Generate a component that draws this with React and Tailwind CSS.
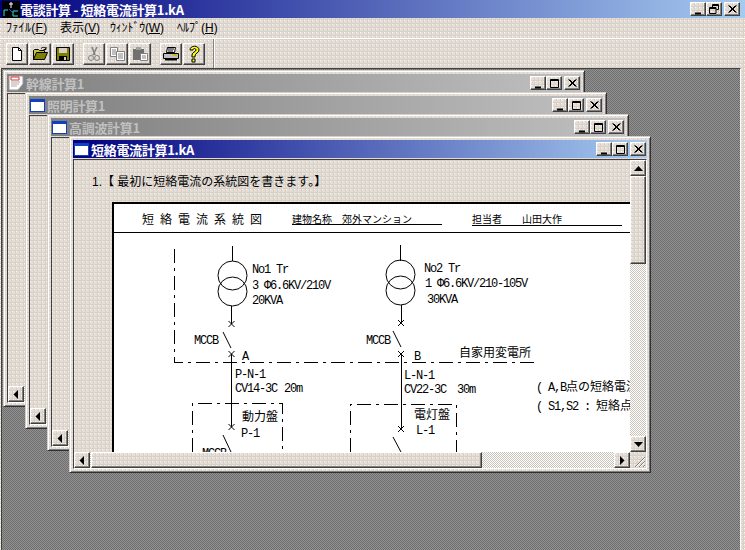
const FACE = "bg-[#d6d2ca] bg-[conic-gradient(from_270deg_at_1px_1px,#fbfae0_25%,transparent_0),conic-gradient(from_270deg_at_3px_3px,#e6dcd8_25%,transparent_0)] bg-[length:4px_4px]";
const DESK = "bg-[#808080] bg-[conic-gradient(#6e6e6e_25%,#929292_0_50%,#6e6e6e_0_75%,#929292_0)] bg-[length:2px_2px]";
const CHECK = "bg-[conic-gradient(#fff_25%,#c8c4bc_0_50%,#fff_0_75%,#c8c4bc_0)] bg-[length:2px_2px]";
const RAISED = "border border-t-white border-l-white border-r-[#404040] border-b-[#404040] shadow-[inset_-1px_-1px_0_#808080]";
const FONT = "font-['Liberation_Sans','Noto_Sans_CJK_JP',sans-serif]";
const TITLE_FONT = "font-['Noto_Sans_CJK_JP','Liberation_Sans',sans-serif]";

function Btn({ className, children }) {
  return <div className={`flex items-center justify-center ${FACE} ${RAISED} ${className}`}>{children}</div>;
}

function CtlIcon({ type }) {
  const paths = {
    min: <path d="M2 9.5h6" strokeWidth="2" />,
    max: <path d="M1.5 1.5h8v8h-8zM1.5 2.5h8" />,
    restore: <path d="M3.5 3V.5h6v5H7.5M3.5 1.5h6M.5 3.5h6.5v6H.5zM.5 4.5h6.5" />,
    close: <path d="M1.5 1.5l7 7M2.5 1.5l7 7M8.5 1.5l-7 7M9.5 1.5l-7 7" />,
  };
  return (
    <svg width="11" height="11" viewBox="0 0 11 11" fill="none" stroke="#000">
      {paths[type]}
    </svg>
  );
}

function Controls({ restore }) {
  return (
    <div className="flex shrink-0">
      <Btn className="w-4 h-3.5"><CtlIcon type="min" /></Btn>
      <Btn className="w-4 h-3.5"><CtlIcon type={restore ? "restore" : "max"} /></Btn>
      <Btn className="w-4 h-3.5 ml-0.5"><CtlIcon type="close" /></Btn>
    </div>
  );
}

function Arrow({ dir }) {
  const d = { left: "M6 0v9L1.5 4.5z", right: "M2 0v9l4.5-4.5z", up: "M4.5 2L9 7H0z", down: "M0 2h9L4.5 7z" };
  return (
    <svg width="9" height="9" viewBox="0 0 9 9">
      <path d={d[dir]} fill="#000" />
    </svg>
  );
}

function WinIcon({ doc }) {
  if (doc)
    return (
      <svg width="16" height="16" viewBox="0 0 16 16" className="shrink-0">
        <path d="M1 1h14v8l-5 6H1z" fill="#fff" stroke="#999" />
        <path d="M3 2h8v3H3z" fill="#fff" stroke="#e03030" />
        <path d="M3 7h9M3 9h8M3 11h6" stroke="#aaa" />
      </svg>
    );
  return (
    <svg width="15" height="13" viewBox="0 0 15 13" className="shrink-0">
      <path d="M0 0h15v13H0z" fill="#1040c0" />
      <path d="M1 3h13v9H1z" fill="#fff" />
    </svg>
  );
}

function ChildWindow({ title, active, doc, className, children }) {
  return (
    <div className={`absolute w-[582px] h-[337px] flex flex-col p-[3px] ${FACE} border border-t-[#d4d0c8] border-l-[#d4d0c8] border-r-[#303030] border-b-[#303030] shadow-[inset_1px_1px_0_#fff,inset_-1px_-1px_0_#808080] ${className}`}>
      <div
        className={`h-[18px] shrink-0 flex items-center pr-px pl-px ${
          active ? "bg-[linear-gradient(to_right,#000080,#a6caf0)]" : "bg-[linear-gradient(to_right,#808080,#c0c0c0)]"
        }`}
      >
        <WinIcon doc={doc} />
        <span className={`ml-0.5 text-[13px] font-bold leading-none flex-1 tracking-[-0.3px] ${TITLE_FONT} ${active ? "text-white" : "text-[#c0c0c0]"}`}>{title}</span>
        <Controls />
      </div>
      <div className="mt-px flex-1 min-h-0 border border-t-[#404040] border-l-[#404040] border-r-white border-b-white grid grid-cols-[1fr_16px] grid-rows-[1fr_16px]">
        <div className="overflow-hidden min-w-0 min-h-0">{children}</div>
        <div className={`flex flex-col ${CHECK}`}>
          <Btn className="w-4 h-4 shrink-0"><Arrow dir="up" /></Btn>
          <Btn className="w-4 h-[88px] shrink-0" />
          <div className="flex-1" />
          <Btn className="w-4 h-4 shrink-0"><Arrow dir="down" /></Btn>
        </div>
        <div className={`flex ${CHECK}`}>
          <Btn className="w-4 h-4 shrink-0"><Arrow dir="left" /></Btn>
          <Btn className="w-[391px] h-4 shrink-0 ml-px" />
          <div className="flex-1" />
          <Btn className="w-4 h-4 shrink-0"><Arrow dir="right" /></Btn>
        </div>
        <div className={`${FACE} flex items-end justify-end overflow-hidden`}>
          <svg width="13" height="13" viewBox="0 0 13 13" fill="none">
            <path d="M12 2L2 12M12 6l-6 6M12 10l-2 2" stroke="#808080" />
            <path d="M12 3L3 12M12 7l-5 5M12 11l-1 1" stroke="#fff" />
          </svg>
        </div>
      </div>
    </div>
  );
}

const ToolIcons = {
  new: (
    <svg width="16" height="16" viewBox="0 0 16 16">
      <path d="M3.5 1.5h6l3 3v10h-9z" fill="#fff" stroke="#000" />
      <path d="M9.5 1.5v3h3" fill="none" stroke="#000" />
    </svg>
  ),
  open: (
    <svg width="17" height="16" viewBox="0 0 17 16">
      <path d="M1.5 13.5v-9l1-1h4l1 1h5v2" fill="#c8c040" stroke="#000" />
      <path d="M1.5 13.5l3-7h11l-3 7z" fill="#808000" stroke="#000" />
      <path d="M9 2.5c1.5-1.5 3.5-1.5 5 0M14 1v2.5h-2.5" fill="none" stroke="#000" />
    </svg>
  ),
  save: (
    <svg width="16" height="16" viewBox="0 0 16 16">
      <path d="M1.5 1.5h13v13h-13z" fill="#808000" stroke="#000" />
      <path d="M4 2h8v5H4z" fill="#d4d0c8" />
      <path d="M4 10h8v4.5H4z" fill="#000" />
      <path d="M9 11h2v3H9z" fill="#d4d0c8" />
    </svg>
  ),
  cut: (
    <svg width="16" height="16" viewBox="0 0 16 16" fill="none" stroke="#808080">
      <path d="M6 1l3 8M11 1L7 9" strokeWidth="1.5" />
      <circle cx="5" cy="12" r="2.5" />
      <circle cx="11" cy="12" r="2.5" />
    </svg>
  ),
  copy: (
    <svg width="17" height="16" viewBox="0 0 17 16" fill="#fff" stroke="#808080">
      <path d="M1.5 1.5h7v9h-7z" />
      <path d="M7.5 5.5h8v9h-8z" />
      <path d="M3 4h4M3 6h4M3 8h4M9 8h5M9 10h5M9 12h5" fill="none" />
    </svg>
  ),
  paste: (
    <svg width="17" height="16" viewBox="0 0 17 16">
      <path d="M1 3h11v11H1z" fill="#707070" />
      <path d="M4 1h5v3H4z" fill="#a0a0a0" />
      <path d="M8.5 7.5h7v7h-7z" fill="#fff" stroke="#808080" />
      <path d="M10 10h4M10 12h4" stroke="#808080" />
    </svg>
  ),
  print: (
    <svg width="18" height="16" viewBox="0 0 18 16">
      <path d="M5.5 1.5h8l-1 5h-8z" fill="#fff" stroke="#000" />
      <path d="M1.5 7.5h15v5h-15z" fill="#c0c0c0" stroke="#000" />
      <path d="M3 13h12v1.5H3z" fill="#000" />
      <path d="M11 9h4" stroke="#c8c000" strokeWidth="2" />
      <path d="M6 3h6M6 5h5" stroke="#000" />
    </svg>
  ),
  help: (
    <svg width="16" height="18" viewBox="0 0 16 18">
      <path d="M4 5c0-5 9-5 9 0 0 3-4 3-4 6v1H6v-2c0-3 4-3 4-5s-3-2-3 0z" fill="#ffff00" stroke="#000" />
      <path d="M6 14h3v3H6z" fill="#ffff00" stroke="#000" />
    </svg>
  ),
};

function ToolGroup({ items, className }) {
  return (
    <div className={`flex gap-px ${className}`}>
      {items.map((k) => (
        <Btn key={k} className="w-[22px] h-[22px]">{ToolIcons[k]}</Btn>
      ))}
    </div>
  );
}

function Breaker({ x, y }) {
  return <path d={`M${x - 3} ${y - 3}l6 6M${x + 3} ${y - 3}l-6 6`} />;
}

const mono = { fontFamily: "'Liberation Mono',monospace", fontSize: 12, letterSpacing: "-1.2px", fill: "#000", stroke: "none" };
const jp = { fontFamily: "'Noto Sans CJK JP',sans-serif", fontSize: 12, letterSpacing: 0, fill: "#000", stroke: "none" };

const labels = [
  ["No1 Tr", 140, 71],
  ["3 Φ6.6KV/210V", 140, 87],
  ["20KVA", 140, 102],
  ["MCCB", 82, 142],
  ["A", 130, 158],
  ["P-N-1", 123, 176],
  ["CV14-3C", 123, 190],
  ["20m", 172, 190],
  ["P-1", 129, 235],
  ["MCCB", 90, 255],
  ["No2 Tr", 312, 70],
  ["1 Φ6.6KV/210-105V", 313, 85],
  ["30KVA", 315, 101],
  ["MCCB", 254, 142],
  ["B", 302, 158],
  ["L-N-1", 292, 177],
  ["CV22-3C", 292, 191],
  ["30m", 345, 191],
  ["L-1", 304, 232],
];

function Diagram() {
  return (
    <svg width="516" height="248" viewBox="2 2 516 248" className="block" stroke="#000" fill="none" shapeRendering="crispEdges">
      <path d="M0 30.5h518M180 22.5h150M360 23.5h150" />
      <path d="M120.5 44v15M119.5 104v18M119.5 152v73M288.5 43v16M289.5 103v18M289.5 152v75" />
      <g shapeRendering="auto">
        <circle cx="120.5" cy="73.5" r="14.5" />
        <circle cx="120.5" cy="89.5" r="14.5" />
        <circle cx="288.5" cy="72.5" r="14.5" />
        <circle cx="288.5" cy="88.5" r="14.5" />
        <Breaker x={119.5} y={122} />
        <Breaker x={119.5} y={152} />
        <Breaker x={289} y={121} />
        <Breaker x={289} y={152} />
        <Breaker x={119.5} y={225} />
        <Breaker x={289} y={227} />
        <path d="M111 130l8 16M281 129l8 16M111 233l8 17M281 235l8 15" />
      </g>
      <path d="M62.5 47v113.5H426" strokeDasharray="14 5 3 5" />
      <path d="M80.5 250V201.5H170.5V250" strokeDasharray="14 5 3 5" />
      <path d="M238.5 250V202.5H344.5V250" strokeDasharray="14 5 3 5" />
      <text x="30" y="22" style={{ ...jp, letterSpacing: "6px" }}>短絡電流系統図</text>
      <text x="180" y="21" style={{ ...jp, fontSize: 10 }}>建物名称</text>
      <text x="230" y="21" style={{ ...jp, fontSize: 10 }}>郊外マンション</text>
      <text x="360" y="21" style={{ ...jp, fontSize: 10 }}>担当者</text>
      <text x="410" y="21" style={{ ...jp, fontSize: 10 }}>山田大作</text>
      <text x="347" y="155" style={jp}>自家用変電所</text>
      <text x="130" y="219" style={jp}>動力盤</text>
      <text x="302" y="217" style={jp}>電灯盤</text>
      {labels.map(([t, x, y]) => (
        <text key={t + x} x={x} y={y} style={mono}>{t}</text>
      ))}
      <text x="424" y="189" style={mono}>( A,B<tspan style={jp}>点の短絡電流</tspan></text>
      <text x="424" y="208" style={mono}>( S1,S2 : <tspan style={jp}>短絡点</tspan></text>
    </svg>
  );
}

export default function App() {
  return (
    <div className={`w-[745px] h-[550px] overflow-hidden flex flex-col ${FACE} ${FONT}`}>
      <div className="h-[18px] shrink-0 flex items-center bg-[linear-gradient(to_right,#000080,#a6caf0)] pr-[5px]">
        <svg width="18" height="17" viewBox="0 0 18 17" className="shrink-0 ml-0.5">
          <path d="M0 0h18v17H0z" fill="#000" />
          <path d="M9 1v6M7 3h4" stroke="#fff" fill="none" />
          <path d="M2 9v6M2 9h4M11 10h5M11 10v5h5" stroke="#30e0e0" fill="none" />
          <path d="M7 8l3 3" stroke="#2050ff" fill="none" />
        </svg>
        <span className={`text-[13px] font-bold leading-none text-white flex-1 tracking-[-0.3px] ${TITLE_FONT}`}>電談計算 - 短絡電流計算1.kA</span>
        <Controls restore />
      </div>
      <div className="h-5 shrink-0 flex items-center pb-px pl-[6px] text-[12px] text-black whitespace-nowrap">
        <span className="w-[54px] tracking-[0.3px]">ﾌｧｲﾙ(<u>F</u>)</span>
        <span className="w-[50px]">表示(<u>V</u>)</span>
        <span className="w-[67px] tracking-[-0.2px]">ｳｨﾝﾄﾞｳ(<u>W</u>)</span>
        <span>ﾍﾙﾌﾟ(<u>H</u>)</span>
      </div>
      <div className="h-[30px] shrink-0 border-t border-t-white flex items-start pt-1 pl-[6px]">
        <ToolGroup items={["new", "open", "save"]} />
        <ToolGroup items={["cut", "copy", "paste"]} className="ml-[9px]" />
        <ToolGroup items={["print", "help"]} className="ml-[9px]" />
        <div className="ml-2 -mt-1 h-[29px] w-0.5 bg-[#808080] border-r border-r-white" />
      </div>
      <div className={`relative flex-1 min-h-0 overflow-hidden ml-px mr-1 border border-t-[#404040] border-l-[#404040] border-r-white border-b-0 ${DESK}`}>
        <ChildWindow title="幹線計算1" doc className="left-px top-px" />
        <ChildWindow title="照明計算1" className="left-[23px] top-[23px]" />
        <ChildWindow title="高調波計算1" className="left-[45px] top-[45px]" />
        <ChildWindow title="短絡電流計算1.kA" active className="left-[67px] top-[67px]">
          <div className="pt-[42px] pl-[38px] relative">
            <div className="absolute left-[18px] top-[14px] text-[12px] leading-4 text-black whitespace-nowrap">1.【 最初に短絡電流の系統図を書きます。】</div>
            <div className="border-l-2 border-t-2 border-black bg-white w-[518px] h-[250px] overflow-hidden">
              <Diagram />
            </div>
          </div>
        </ChildWindow>
      </div>
    </div>
  );
}
